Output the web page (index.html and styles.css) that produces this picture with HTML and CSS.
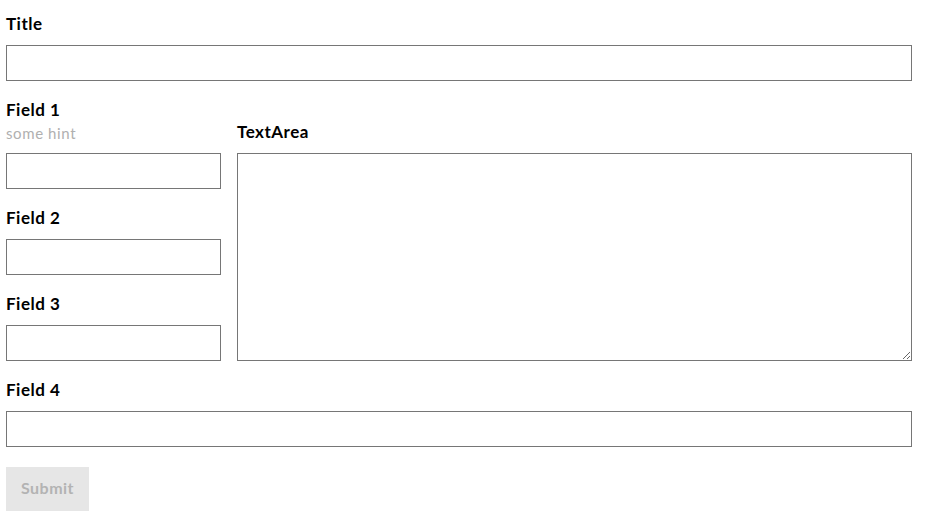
FILE: index.html
```html
<!DOCTYPE html>
<html lang="en">
<head>
<meta charset="utf-8">
<title>Form</title>
<link rel="stylesheet" href="styles.css">
</head>
<body>
<form class="form">
  <div class="field">
    <div class="field-head"><label class="label" for="title">Title</label></div>
    <input class="input" id="title" type="text">
  </div>

  <div class="split">
    <div class="col-left">
      <div class="field">
        <div class="field-head">
          <label class="label" for="f1">Field 1</label>
          <div class="hint">some hint</div>
        </div>
        <input class="input" id="f1" type="text">
      </div>
      <div class="field">
        <div class="field-head"><label class="label" for="f2">Field 2</label></div>
        <input class="input" id="f2" type="text">
      </div>
      <div class="field">
        <div class="field-head"><label class="label" for="f3">Field 3</label></div>
        <input class="input" id="f3" type="text">
      </div>
    </div>
    <div class="col-right">
      <div class="field-head"><label class="label" for="ta">TextArea</label></div>
      <textarea class="textarea" id="ta"></textarea>
    </div>
  </div>

  <div class="field">
    <div class="field-head"><label class="label" for="f4">Field 4</label></div>
    <input class="input" id="f4" type="text">
  </div>

  <button class="submit" type="button">Submit</button>
</form>
</body>
</html>
```

FILE: styles.css
```css
* { box-sizing: border-box; }

html, body {
  margin: 0;
  background: #ffffff;
}

body {
  padding: 12px 6px;
  font-family: Lato, "Noto Sans", "Liberation Sans", sans-serif;
  color: #000;
}

.form {
  width: 906px;
  display: flex;
  flex-direction: column;
}

.field + .field,
.split + .field,
.field + .split {
  margin-top: 17px;
}

.field-head {
  margin-bottom: 9px;
}

.label {
  display: block;
  font-size: 17px;
  line-height: 24px;
  font-weight: 700;
  letter-spacing: 0.5px;
  color: #000;
}

.hint {
  margin-top: 0;
  font-size: 15px;
  line-height: 22px;
  letter-spacing: 0.6px;
  color: #b0b0b0;
}

.input {
  display: block;
  width: 100%;
  height: 36px;
  margin: 0;
  padding: 0 8px;
  border: 1px solid #767676;
  border-radius: 0;
  background: #fff;
  font: inherit;
}

.split {
  display: flex;
  gap: 16px;
}

.col-left {
  width: 215px;
  flex: none;
  display: flex;
  flex-direction: column;
}

.col-right {
  flex: 1;
  display: flex;
  flex-direction: column;
  justify-content: flex-end;
}

.textarea {
  display: block;
  width: 100%;
  height: 208px;
  margin: 0;
  padding: 6px 8px;
  border: 1px solid #767676;
  border-radius: 0;
  background: #fff;
  font: inherit;
}

.submit {
  align-self: flex-start;
  margin-top: 20px;
  width: 83px;
  height: 44px;
  padding: 0 0 3px;
  border: none;
  border-radius: 0;
  background: #e6e6e6;
  color: #b3b3b3;
  font-family: Lato, "Noto Sans", "Liberation Sans", sans-serif;
  font-size: 16px;
  font-weight: 700;
  letter-spacing: 0.5px;
}
```
